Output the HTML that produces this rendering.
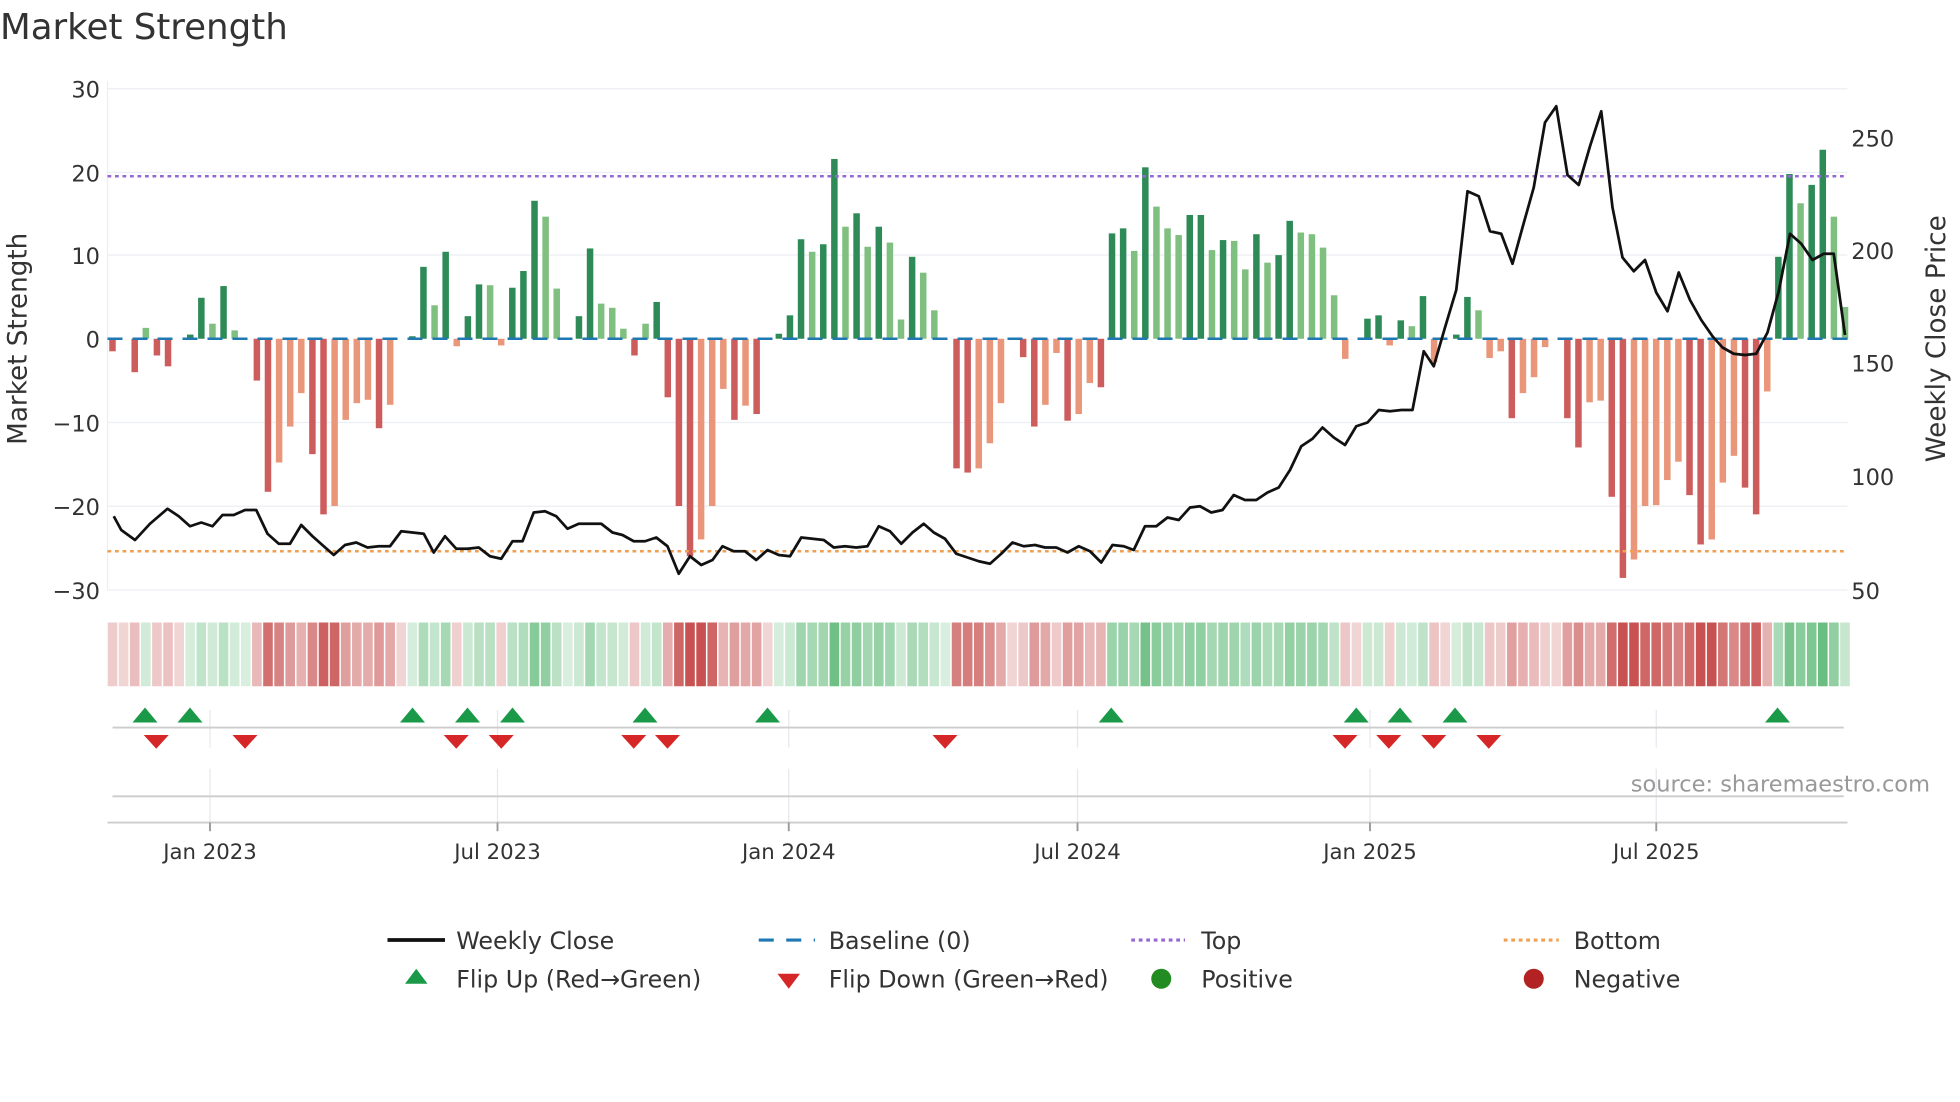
<!DOCTYPE html>
<html><head><meta charset="utf-8"><style>
html,body{margin:0;padding:0;background:#fff;}
svg{display:block;font-family:"DejaVu Sans","Liberation Sans",sans-serif;}
</style></head><body>
<svg id="s" width="1960" height="1102" viewBox="0 0 1568 881.6" preserveAspectRatio="none" xmlns="http://www.w3.org/2000/svg">
<rect width="1568" height="882" fill="#fff"/>
<text x="0" y="31" font-size="28.5" fill="#333">Market Strength</text>
<g id="grid" stroke="#eceef3" stroke-width="1">
<line x1="86" x2="1478" y1="71" y2="71"/><line x1="86" x2="1478" y1="138" y2="138"/><line x1="86" x2="1478" y1="204" y2="204"/>
<line x1="86" x2="1478" y1="338" y2="338"/><line x1="86" x2="1478" y1="405" y2="405"/><line x1="86" x2="1478" y1="472" y2="472"/>
<line x1="86" x2="86" y1="65" y2="472"/>
</g>
<g font-size="18" fill="#333" text-anchor="end">
<text x="80" y="78">30</text><text x="80" y="145">20</text><text x="80" y="211">10</text><text x="80" y="278">0</text>
<text x="80" y="345">−10</text><text x="80" y="412">−20</text><text x="80" y="479">−30</text>
</g>
<g font-size="18" fill="#333">
<text x="1481" y="117">250</text><text x="1481" y="207">200</text><text x="1481" y="297">150</text><text x="1481" y="388">100</text><text x="1481" y="479">50</text>
</g>
<text transform="translate(21,271) rotate(-90)" font-size="21" fill="#333" text-anchor="middle">Market Strength</text>
<text transform="translate(1556,271) rotate(-90)" font-size="21" fill="#333" text-anchor="middle">Weekly Close Price</text>
<g id="bars"></g>
<line x1="86" x2="1478" y1="271" y2="271" stroke="#1f77b4" stroke-width="2" stroke-dasharray="12,8"/>
<line x1="86" x2="1478" y1="141" y2="141" stroke="#9467d3" stroke-width="2" stroke-dasharray="3,3"/>
<line x1="86" x2="1478" y1="441" y2="441" stroke="#f0a050" stroke-width="2" stroke-dasharray="3,3"/>
<polyline id="price" fill="none" stroke="#111" stroke-width="2.2" stroke-linejoin="round"/>
<g id="strip"></g>
<g stroke="#e6e8ee" stroke-width="1">
<line x1="168" x2="168" y1="568" y2="598"/><line x1="398" x2="398" y1="568" y2="598"/><line x1="631" x2="631" y1="568" y2="598"/><line x1="862" x2="862" y1="568" y2="598"/><line x1="1096" x2="1096" y1="568" y2="598"/><line x1="1325" x2="1325" y1="568" y2="598"/>
<line x1="168" x2="168" y1="615" y2="658"/><line x1="398" x2="398" y1="615" y2="658"/><line x1="631" x2="631" y1="615" y2="658"/><line x1="862" x2="862" y1="615" y2="658"/><line x1="1096" x2="1096" y1="615" y2="658"/><line x1="1325" x2="1325" y1="615" y2="658"/>
</g>
<line x1="90" x2="1475" y1="582" y2="582" stroke="#ccc" stroke-width="1.5"/>
<line x1="90" x2="1475" y1="637" y2="637" stroke="#ccc" stroke-width="1.5"/>
<line x1="86" x2="1478" y1="658" y2="658" stroke="#ccc" stroke-width="1.5"/>
<g stroke="#999" stroke-width="1.5">
<line x1="168" x2="168" y1="658" y2="665"/><line x1="398" x2="398" y1="658" y2="665"/><line x1="631" x2="631" y1="658" y2="665"/><line x1="862" x2="862" y1="658" y2="665"/><line x1="1096" x2="1096" y1="658" y2="665"/><line x1="1325" x2="1325" y1="658" y2="665"/>
</g>
<g id="mk"></g>
<text x="1544" y="633" font-size="18" fill="#999" text-anchor="end">source: sharemaestro.com</text>
<g font-size="17" fill="#333" text-anchor="middle">
<text x="168" y="687">Jan 2023</text><text x="398" y="687">Jul 2023</text><text x="631" y="687">Jan 2024</text><text x="862" y="687">Jul 2024</text><text x="1096" y="687">Jan 2025</text><text x="1325" y="687">Jul 2025</text>
</g>
<g font-size="19" fill="#333">
<line x1="310" x2="356" y1="752" y2="752" stroke="#111" stroke-width="3"/>
<text x="365" y="759">Weekly Close</text>
<line x1="607" x2="652" y1="752" y2="752" stroke="#1f77b4" stroke-width="2.5" stroke-dasharray="12,10"/>
<text x="663" y="759">Baseline (0)</text>
<line x1="905" x2="948" y1="752" y2="752" stroke="#9467d3" stroke-width="2.5" stroke-dasharray="3,3"/>
<text x="961" y="759">Top</text>
<line x1="1203" x2="1247" y1="752" y2="752" stroke="#f0a050" stroke-width="2.5" stroke-dasharray="3,3"/>
<text x="1259" y="759">Bottom</text>
<polygon points="324,787 342,787 333,775" fill="#1a9a48"/>
<text x="365" y="790">Flip Up (Red→Green)</text>
<polygon points="622,779 640,779 631,791" fill="#d62728"/>
<text x="663" y="790">Flip Down (Green→Red)</text>
<circle cx="929" cy="783" r="8" fill="#228b22"/>
<text x="961" y="790">Positive</text>
<circle cx="1227" cy="783" r="8" fill="#b22222"/>
<text x="1259" y="790">Negative</text>
</g>
</svg>
<script>
var V=[-1.5,0,-4,1.3,-2,-3.3,0,0.5,4.9,1.8,6.3,1,0,-5,-18.3,-14.8,-10.5,-6.5,-13.8,-21,-20,-9.7,-7.7,-7.3,-10.7,-7.9,0,0.3,8.6,4,10.4,-0.9,2.7,6.5,6.4,-0.8,6.1,8.1,16.5,14.6,6,0,2.7,10.8,4.2,3.7,1.2,-2,1.8,4.4,-7,-20,-26,-24,-20,-6,-9.7,-8,-9,0,0.6,2.8,11.9,10.4,11.3,21.5,13.4,15,11,13.4,11.5,2.3,9.8,7.9,3.4,0,-15.5,-16,-15.5,-12.5,-7.7,0,-2.2,-10.5,-7.9,-1.7,-9.8,-9,-5.3,-5.8,12.6,13.2,10.5,20.5,15.8,13.2,12.4,14.8,14.8,10.6,11.8,11.7,8.3,12.5,9.1,10,14.1,12.7,12.5,10.9,5.2,-2.4,0,2.4,2.8,-0.8,2.2,1.5,5.1,-2.8,0,0.5,5,3.4,-2.3,-1.5,-9.5,-6.5,-4.6,-1,0,-9.5,-13,-7.6,-7.4,-18.9,-28.6,-26.4,-20,-19.9,-16.9,-14.7,-18.7,-24.6,-24,-17.2,-14,-17.8,-21,-6.3,9.8,19.7,16.2,18.4,22.6,14.6,3.8];
var N=V.length, x0=90, step=(1476-90)/(N-1), ns="http://www.w3.org/2000/svg";
function el(t,a,p){var e=document.createElementNS(ns,t);for(var k in a)e.setAttribute(k,a[k]);document.getElementById(p).appendChild(e);return e;}
var prev=0,sign=-1;
for(var i=0;i<N;i++){
 var v=V[i],x=x0+i*step;
 if(v!==0){var dark=Math.abs(v)>=Math.abs(prev);
  var c=v>0?(dark?"#2e8b57":"#7fbf7f"):(dark?"#cd5c5c":"#e9967a");
  var y1=271,y2=271-v*6.69;
  el("rect",{x:x-2.6,y:Math.min(y1,y2),width:5.2,height:Math.abs(y2-y1),fill:c},"bars");
  sign=v>0?1:-1;}
 prev=v;
 var a=0.25+0.75*Math.min(Math.abs(v)/24,1);
 var sc=sign>0?"rgba(60,170,90,"+(a*0.8)+")":"rgba(190,50,50,"+(a*0.85)+")";
 el("rect",{x:x-step/2+0.6,y:498,width:step-1.2,height:51,fill:sc},"strip");
}
var P=[[91,413],[97,424],[108,432],[120,419],[134,407],[143,413],[152,421],[161,418],[170,421],[178,412],[187,412],[196,408],[205,408],[214,427],[223,435],[232,435],[241,420],[250,429],[259,437],[267,444],[276,436],[285,434],[294,438],[303,437],[312,437],[321,425],[330,426],[339,427],[347,442],[356,429],[365,439],[374,439],[383,438],[392,445],[401,447],[410,433],[418,433],[427,410],[436,409],[445,413],[454,423],[463,419],[472,419],[481,419],[490,426],[498,428],[507,433],[516,433],[525,430],[534,437],[543,459],[552,445],[561,452],[570,448],[578,437],[587,441],[596,441],[605,448],[614,440],[623,444],[632,445],[641,430],[650,431],[659,432],[667,438],[676,437],[685,438],[694,437],[703,421],[712,425],[721,435],[730,426],[739,419],[747,426],[756,431],[765,443],[774,446],[783,449],[792,451],[801,443],[810,434],[819,437],[828,436],[836,438],[845,438],[854,442],[863,437],[872,441],[881,450],[890,436],[899,437],[907,440],[916,421],[925,421],[934,414],[943,416],[952,406],[960,405],[969,410],[978,408],[987,396],[996,400],[1005,400],[1014,394],[1023,390],[1032,376],[1041,357],[1050,351],[1058,342],[1067,350],[1076,356],[1085,341],[1094,338],[1103,328],[1112,329],[1121,328],[1130,328],[1139,281],[1147,293],[1156,262],[1165,232],[1174,153],[1183,157],[1192,185],[1201,187],[1210,211],[1218,182],[1227,150],[1236,98],[1245,85],[1254,140],[1263,148],[1272,117],[1281,89],[1290,166],[1298,206],[1307,217],[1316,208],[1325,234],[1334,249],[1343,218],[1352,240],[1361,256],[1370,269],[1378,278],[1387,283],[1396,284],[1405,283],[1414,266],[1423,233],[1432,187],[1441,195],[1450,208],[1459,203],[1467,203],[1476,268]];
document.getElementById("price").setAttribute("points",P.map(function(p){return p.join(",")}).join(" "));
[116,152,330,374,410,516,614,889,1085,1120,1164,1422].forEach(function(x){el("polygon",{points:(x-10)+",578 "+(x+10)+",578 "+x+",566",fill:"#1a9a48"},"mk");});
[125,196,365,401,507,534,756,1076,1111,1147,1191].forEach(function(x){el("polygon",{points:(x-10)+",588 "+(x+10)+",588 "+x+",599",fill:"#d62728"},"mk");});
</script>
</body></html>
